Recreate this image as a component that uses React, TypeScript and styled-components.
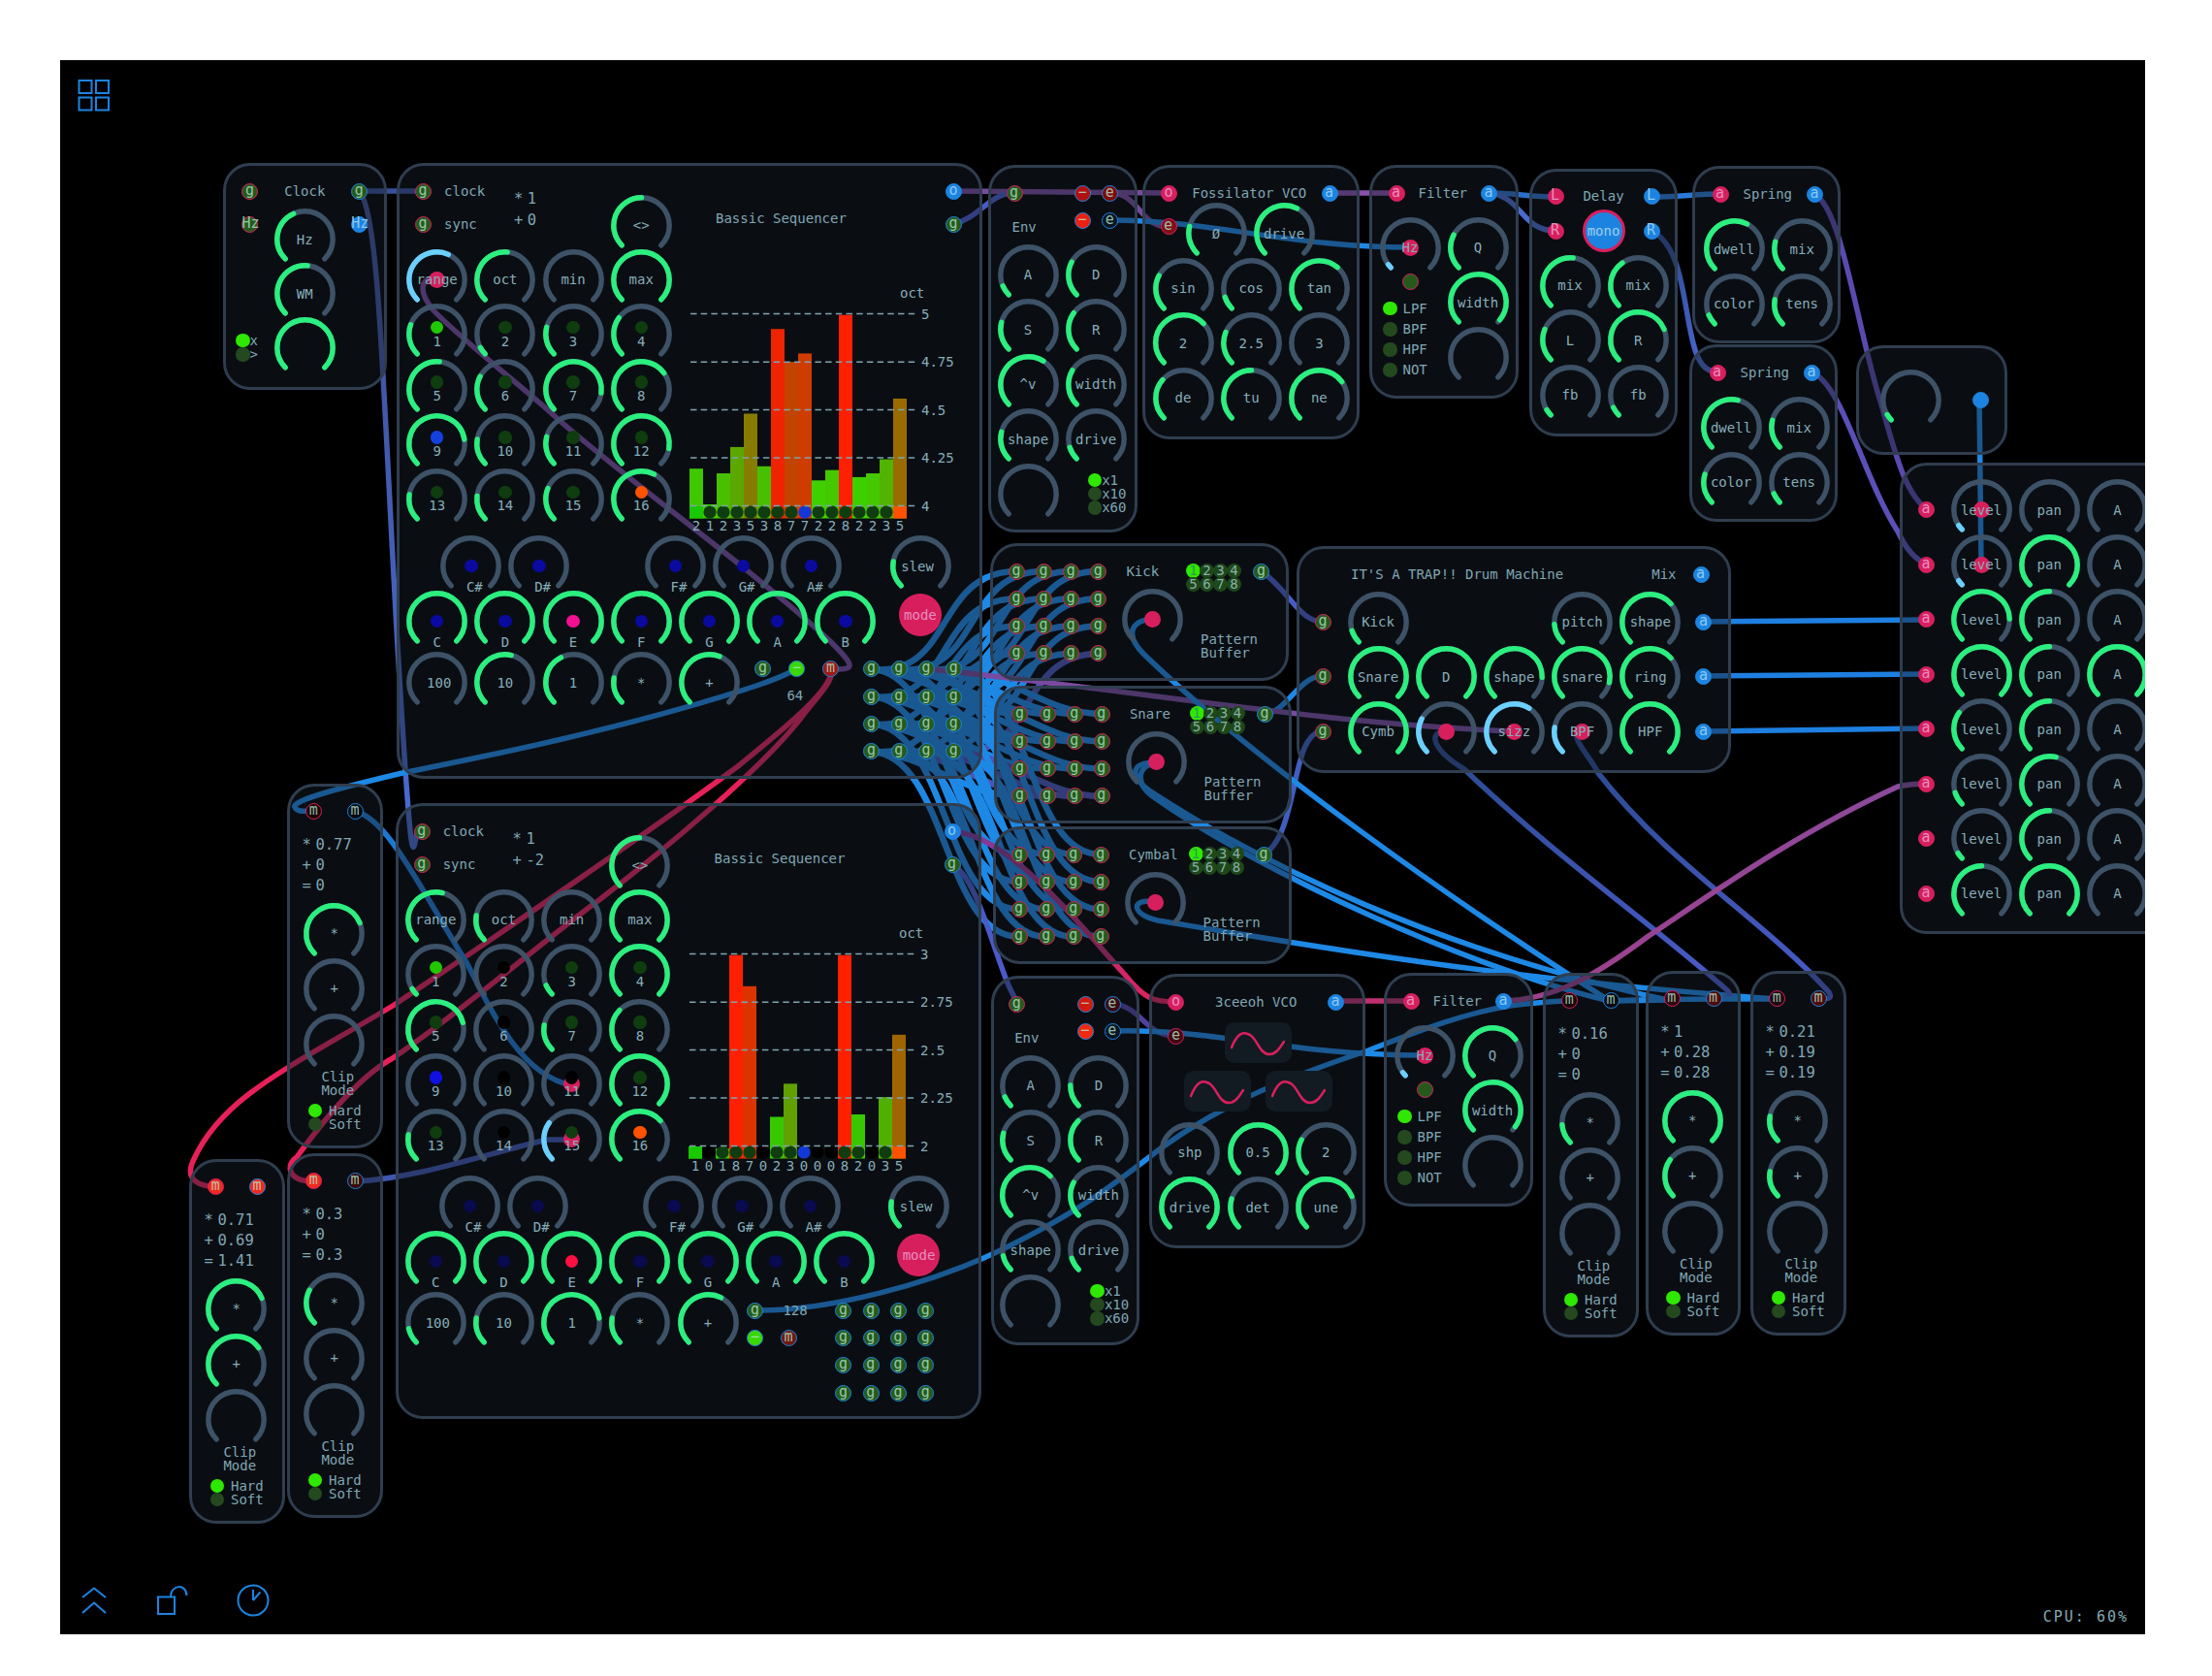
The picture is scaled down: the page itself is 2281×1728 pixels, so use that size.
import React from "react";
import styled, { createGlobalStyle } from "styled-components";

const GlobalStyle = createGlobalStyle`
  html, body { margin: 0; padding: 0; background: #fff; }
  body { font-family: "DejaVu Sans Mono", "Liberation Mono", monospace; font-size: 14px; color: #80a6b2; }
`;

const PINK = "#d81f5e";
const BLUE = "#1c84e0";
const WIRE = "#1e88e5";
const PURPLE = "#7a4a9e";
const INDIGO = "#4a5ac8";

const Page = styled.div`
  width: 2281px;
  height: 1728px;
  box-sizing: border-box;
  padding: 62px 69px 43px 62px;
  overflow: hidden;
`;
const Canvas = styled.main`
  position: relative;
  width: 2150px;
  height: 1623px;
  background: #000;
  overflow: hidden;
`;
const WireLayer = styled.svg`
  position: absolute;
  left: 0;
  top: 0;
  width: 2150px;
  height: 1623px;
  fill: none;
  stroke-linecap: round;
`;
const Module = styled.section<{ $x: number; $y: number; $w: number; $h: number }>`
  position: absolute;
  left: ${(p) => p.$x - 62}px;
  top: ${(p) => p.$y - 62}px;
  width: ${(p) => p.$w}px;
  height: ${(p) => p.$h}px;
  box-sizing: border-box;
  border: 3px solid #2f3e4f;
  border-radius: 28px;
  background: rgba(22, 30, 42, 0.45);
`;
const Icon = styled.svg<{ $x: number; $y: number }>`
  position: absolute;
  left: ${(p) => p.$x - 62}px;
  top: ${(p) => p.$y - 62}px;
  fill: none;
  stroke: ${BLUE};
  stroke-width: 2;
`;
const Cpu = styled.div`
  position: absolute;
  right: 17px;
  bottom: 9px;
  font-size: 15px;
  letter-spacing: 2px;
  color: #86aab6;
`;

/* ---------- knob ---------- */
const KnobBox = styled.div<{ $c?: number; $r?: number; $end?: boolean; $ml?: number }>`
  position: relative;
  width: 63px;
  height: 56px;
  ${(p) => (p.$c ? `grid-column: ${p.$c} / span 2;` : "")}
  ${(p) => (p.$r ? `grid-row: ${p.$r};` : "")}
  ${(p) => (p.$end ? "align-self: end;" : "")}
  ${(p) => (p.$ml ? `margin-left: ${p.$ml}px;` : "")}
`;
const KnobArc = styled.svg`
  display: block;
  overflow: visible;
  fill: none;
  stroke-linecap: round;
  stroke-width: 5.4;
`;
const KnobLabel = styled.span<{ $dy: number; $dx: number }>`
  position: absolute;
  left: ${(p) => p.$dx}px;
  right: ${(p) => -p.$dx}px;
  top: ${(p) => 22.5 + p.$dy}px;
  height: 18px;
  line-height: 18px;
  text-align: center;
  white-space: nowrap;
  color: #86adb8;
`;
const KnobDot = styled.i<{ $dy: number; $size: number; $color: string }>`
  position: absolute;
  left: ${(p) => 31.5 - p.$size / 2}px;
  top: ${(p) => 31.5 - p.$size / 2 + p.$dy}px;
  width: ${(p) => p.$size}px;
  height: ${(p) => p.$size}px;
  border-radius: 50%;
  background: ${(p) => p.$color};
`;

const pt = (f: number, r = 28.7) => {
  const a = ((-135 + 270 * f) * Math.PI) / 180;
  return `${(31.5 + r * Math.sin(a)).toFixed(2)} ${(31.5 - r * Math.cos(a)).toFixed(2)}`;
};
const arc = (f: number) => `M${pt(0)} A28.7 28.7 0 ${f > 2 / 3 ? 1 : 0} 1 ${pt(Math.max(f, 0.001))}`;

type KnobProps = {
  v: number;
  label?: string;
  dy?: number;
  dx?: number;
  mod?: boolean;
  dot?: string;
  dotDy?: number;
  pin?: boolean;
  c?: number;
  r?: number;
  end?: boolean;
  ml?: number;
};
const Knob = ({ v, label, dy = 0, dx = 0, mod, dot, dotDy = 0, pin, c, r, end, ml }: KnobProps) => (
  <KnobBox $c={c} $r={r} $end={end} $ml={ml}>
    <KnobArc width={63} height={56} viewBox="0 0 63 56">
      <path d={arc(1)} stroke="#3d5267" />
      {v > 0 && <path d={arc(v)} stroke={mod ? "#6bd0ff" : "#2bef7e"} />}
    </KnobArc>
    {pin && <KnobDot $dy={0} $size={17} $color={PINK} />}
    {dot && <KnobDot $dy={dotDy} $size={13.5} $color={dot} />}
    {label && (
      <KnobLabel $dy={dy} $dx={dx}>
        {label}
      </KnobLabel>
    )}
  </KnobBox>
);

/* ---------- ports and small parts ---------- */
const PortDot = styled.span<{ $fill: string; $ring: string; $ml?: number; $text: string }>`
  flex: none;
  display: block;
  box-sizing: border-box;
  width: 17px;
  height: 17px;
  border-radius: 50%;
  background: ${(p) => p.$fill};
  border: 1.6px solid ${(p) => p.$ring};
  color: ${(p) => p.$text};
  font-size: 15px;
  line-height: 12.5px;
  text-align: center;
  white-space: nowrap;
  text-indent: -1px;
  ${(p) => (p.$ml ? `margin-left: ${p.$ml}px;` : "")}
`;
const Port = ({
  t,
  fill,
  ring,
  ml,
  text = "rgba(175, 225, 200, 0.82)",
}: {
  t?: string;
  fill: string;
  ring: string;
  ml?: number;
  text?: string;
}) => (
  <PortDot $fill={fill} $ring={ring} $ml={ml} $text={text}>
    {t}
  </PortDot>
);
const GREENPORT = "#265a1c";
const GIn = ({ t = "g" }: { t?: string }) => <Port t={t} fill={GREENPORT} ring={PINK} />;
const GOut = ({ t = "g", ml }: { t?: string; ml?: number }) => <Port t={t} fill={GREENPORT} ring={BLUE} ml={ml} />;
const AIn = ({ t = "a" }: { t?: string }) => <Port t={t} fill={PINK} ring={PINK} text="#e58fc0" />;
const AOut = ({ t = "a" }: { t?: string }) => <Port t={t} fill={BLUE} ring={BLUE} text="#8cc8f0" />;

const LedRow = styled.div<{ $h: number; $gap: number }>`
  display: flex;
  align-items: center;
  height: ${(p) => p.$h}px;
  gap: ${(p) => p.$gap}px;
  line-height: ${(p) => p.$h}px;
`;
const LedDot = styled.i<{ $on?: boolean }>`
  flex: none;
  width: 14.5px;
  height: 14.5px;
  border-radius: 50%;
  background: ${(p) => (p.$on ? "#2ee800" : "#24491f")};
`;
const Led = ({ on, t, h = 14.2, gap = 0 }: { on?: boolean; t: string; h?: number; gap?: number }) => (
  <LedRow $h={h} $gap={gap}>
    <LedDot $on={on} />
    <span>{t}</span>
  </LedRow>
);

const Title = styled.div<{ $ml?: number; $w?: number; $center?: boolean }>`
  height: 17px;
  line-height: 17px;
  white-space: nowrap;
  ${(p) => (p.$ml ? `margin-left: ${p.$ml}px;` : "")}
  ${(p) => (p.$w ? `width: ${p.$w}px;` : "")}
  ${(p) => (p.$center ? "text-align: center; flex: 1;" : "")}
`;
const HeadRow = styled.div<{ $pl: number; $pr: number; $pt: number }>`
  display: flex;
  align-items: center;
  padding: ${(p) => p.$pt}px ${(p) => p.$pr}px 0 ${(p) => p.$pl}px;
`;
const KnobGrid = styled.div<{ $cols: number; $pl: number; $mt: number }>`
  display: grid;
  grid-template-columns: repeat(${(p) => p.$cols}, 70.2px);
  grid-auto-rows: 56.6px;
  padding-left: ${(p) => p.$pl}px;
  margin-top: ${(p) => p.$mt}px;
`;

/* math read-out: a symbol cell and a value */
const MathBlock = styled.div<{ $lh: number; $mt: number; $ml: number }>`
  margin: ${(p) => p.$mt}px 0 0 ${(p) => p.$ml}px;
  font-size: 15.5px;
  line-height: ${(p) => p.$lh}px;
`;
const MathRow = styled.div`
  display: flex;
  white-space: pre;
`;
const MathSym = styled.span`
  width: 13.8px;
  flex: none;
`;
const MathLines = ({ lines, lh, mt, ml }: { lines: string[]; lh: number; mt: number; ml: number }) => (
  <MathBlock $lh={lh} $mt={mt} $ml={ml}>
    {lines.map((l) => (
      <MathRow key={l}>
        <MathSym>{l[0]}</MathSym>
        <span>{l.slice(1)}</span>
      </MathRow>
    ))}
  </MathBlock>
);

/* ---------- clock ---------- */
const ClockGrid = styled.div`
  display: grid;
  grid-template-columns: 49.8px 63px 49.8px;
  grid-template-rows: 35px 56px 56px 56px;
  padding-top: 9px;
  justify-items: center;
  align-items: center;
`;
const SideCell = styled.div<{ $c: number; $r: number; $mt: number }>`
  grid-column: ${(p) => p.$c};
  grid-row: ${(p) => p.$r};
  align-self: start;
  margin-top: ${(p) => p.$mt}px;
  width: 100%;
  display: flex;
  flex-direction: column;
  align-items: center;
`;
const ClockKnob = styled.div<{ $r: number }>`
  grid-column: 2;
  grid-row: ${(p) => p.$r};
`;
const LedStack = styled.div<{ $pl?: number }>`
  align-self: stretch;
  ${(p) => (p.$pl ? `padding-left: ${p.$pl}px;` : "")}
`;

const Clock = () => (
  <Module $x={230} $y={168} $w={169} $h={234}>
    <ClockGrid>
      <GIn />
      <Title>Clock</Title>
      <GOut />
      <SideCell $c={1} $r={2} $mt={8.3}>
        <GIn t="Hz" />
      </SideCell>
      <ClockKnob $r={2}>
        <Knob v={0.41} label="Hz" />
      </ClockKnob>
      <SideCell $c={3} $r={2} $mt={8.3}>
        <AOut t="Hz" />
      </SideCell>
      <ClockKnob $r={3}>
        <Knob v={0.52} label="WM" />
      </ClockKnob>
      <SideCell $c={1} $r={4} $mt={17}>
        <LedStack $pl={10}>
          <Led on t="x" />
          <Led t=">" />
        </LedStack>
      </SideCell>
      <ClockKnob $r={4}>
        <Knob v={1} />
      </ClockKnob>
    </ClockGrid>
  </Module>
);

/* ---------- sequencer ---------- */
const SeqTop = styled.div`
  display: flex;
  padding: 14px 0 0 7.2px;
  box-sizing: border-box;
  height: 381px;
`;
const SeqKnobs = styled.div`
  display: grid;
  flex: none;
  width: 280.8px;
  grid-template-columns: repeat(4, 70.2px);
  grid-template-rows: 71.5px repeat(5, 56.6px);
`;
const SeqHeader = styled.div`
  grid-column: 1 / 4;
  display: flex;
  padding-top: 3.5px;
`;
const SeqPorts = styled.div`
  width: 110.8px;
  padding-left: 8.9px;
  box-sizing: border-box;
  display: flex;
  flex-direction: column;
  gap: 17px;
`;
const SeqPortRow = styled.div`
  display: flex;
  align-items: center;
  gap: 13px;
  height: 17px;
  line-height: 17px;
`;
const SeqRight = styled.div`
  flex: none;
  width: 306px;
`;
const SeqRightHead = styled.div`
  display: flex;
  justify-content: space-between;
  height: 71.5px;
  padding: 3.5px 0 0 38px;
  box-sizing: border-box;
`;
const SeqTitle = styled.div`
  margin-top: 28px;
  line-height: 17px;
`;
const SeqOutPorts = styled.div`
  width: 31px;
  display: flex;
  flex-direction: column;
  gap: 17px;
`;
const Chart = styled.svg`
  display: block;
  overflow: visible;
  text {
    font-family: "DejaVu Sans Mono", monospace;
    font-size: 14px;
    fill: #86adb8;
  }
  line {
    stroke: #7fa4ad;
    stroke-width: 1.4;
    stroke-dasharray: 6.5 4.2;
  }
`;
const NoteGrid = styled.div`
  display: grid;
  grid-template-columns: repeat(18, 35.1px);
  grid-template-rows: 57.2px 63px 56px;
  padding-left: 7.2px;
`;
const ModeCell = styled.div`
  grid-column: 15 / span 4;
  grid-row: 2;
  padding: 2.8px 0 0 16.4px;
`;
const RoundButton = styled.div<{ $ring?: boolean }>`
  box-sizing: border-box;
  width: 44px;
  height: 44px;
  border-radius: 50%;
  background: ${(p) => (p.$ring ? BLUE : PINK)};
  border: ${(p) => (p.$ring ? `3px solid ${PINK}` : "none")};
  display: flex;
  align-items: center;
  justify-content: center;
  color: ${(p) => (p.$ring ? "#9ccff0" : "#e58fc0")};
`;
const SeqPortCell = styled.div`
  grid-column: 11 / -1;
  grid-row: 3;
  display: flex;
  width: 280px;
`;
const GGrid = styled.div`
  flex: none;
  display: grid;
  grid-template-columns: repeat(4, 11.3px);
  column-gap: 17px;
  row-gap: 11.3px;
  grid-auto-rows: 17px;
`;
const PortLine = styled.div<{ $gap: number; $h?: number }>`
  display: flex;
  align-items: center;
  gap: ${(p) => p.$gap}px;
  margin-bottom: 11px;
  ${(p) => (p.$h ? `height: ${p.$h}px;` : "")}
`;
const PortsA = styled.div`
  width: 120.3px;
  flex: none;
  padding: 9.3px 0 0 8.3px;
  box-sizing: border-box;
`;
const PortsB = styled.div`
  width: 92.7px;
  flex: none;
  padding: 10.5px 0 0 1.7px;
  box-sizing: border-box;
`;
const PortNote = styled.div<{ $ml: number; $mt: number }>`
  margin: ${(p) => p.$mt}px 0 0 ${(p) => p.$ml}px;
  line-height: 17px;
`;
const GGridWrap = styled.div<{ $pt: number }>`
  padding-top: ${(p) => p.$pt}px;
`;
const GOutTone = () => <Port t="g" fill={GREENPORT} ring={BLUE} />;

const GPorts = () => (
  <GGrid>
    {Array.from({ length: 16 }, (_, i) => (
      <GOutTone key={i} />
    ))}
  </GGrid>
);

type Step = { v: number; dot: string; mod?: boolean; pin?: boolean };
type SeqProps = {
  x: number;
  y: number;
  math: string[];
  head: number[];
  steps: Step[];
  noteDot: string;
  eDot: string;
  bottom: number[];
  slew: number;
  labels: string[];
  digits: string;
  bars: [number, string, number][];
  rangeMod?: boolean;
  variant: "a" | "b";
  rangePin?: boolean;
};
const G = "#0f3d0f";
const K = "#000";

const Sequencer = (p: SeqProps) => {
  const chartBars = p.bars;
  return (
    <Module $x={p.x} $y={p.y} $w={604} $h={635}>
      <SeqTop>
        <SeqKnobs>
          <SeqHeader>
            <SeqPorts>
              <SeqPortRow>
                <GIn />
                <span>clock</span>
              </SeqPortRow>
              <SeqPortRow>
                <GIn />
                <span>sync</span>
              </SeqPortRow>
            </SeqPorts>
            <MathLines lines={p.math} lh={22} mt={5} ml={0} />
          </SeqHeader>
          <Knob v={0.5} label="<>" end />
          <Knob v={p.head[0]} label="range" mod={p.rangeMod} pin={p.rangePin} />
          <Knob v={p.head[1]} label="oct" />
          <Knob v={0} label="min" />
          <Knob v={1} label="max" />
          {p.steps.map((s, i) => (
            <Knob key={i} v={s.v} label={String(i + 1)} dy={7} dot={s.dot} dotDy={-7} mod={s.mod} pin={s.pin} />
          ))}
        </SeqKnobs>
        <SeqRight>
          <SeqRightHead>
            <SeqTitle>Bassic Sequencer</SeqTitle>
            <SeqOutPorts>
              <AOut t="o" />
              <GOutTone />
            </SeqOutPorts>
          </SeqRightHead>
          <Chart width={306} height={296} viewBox="0 0 306 296">
            {chartBars.map(([top, color], i) =>
              top < 277 ? <rect key={i} x={11 + i * 14} y={top} width={14} height={277.5 - top} fill={color} /> : null
            )}
            {chartBars.map(([, , kind], i) =>
              kind === 3 ? (
                <rect key={i} x={11 + i * 14} y={265} width={14} height={12.5} fill={i === 0 ? "#18c800" : "#ff5200"} />
              ) : (
                <circle key={i} cx={18 + i * 14} cy={271} r={6.6} fill={kind === 2 ? "#1438d8" : kind === 1 ? K : G} />
              )
            )}
            {[66.5, 116.2, 165.5, 215, 264.5].map((ly, i) => (
              <g key={ly}>
                <line x1={12} x2={245} y1={ly} y2={ly} />
                <text x={250} y={ly + 5}>
                  {p.labels[i]}
                </text>
              </g>
            ))}
            <text x={228} y={50}>
              oct
            </text>
            {p.digits.split("").map((d, i) => (
              <text key={i} x={18 + i * 14} y={290} textAnchor="middle">
                {d}
              </text>
            ))}
          </Chart>
        </SeqRight>
      </SeqTop>
      <NoteGrid>
        {[
          ["C#", 2],
          ["D#", 4],
          ["F#", 8],
          ["G#", 10],
          ["A#", 12],
        ].map(([n, c]) => (
          <Knob key={n} v={0} label={n as string} dy={21} dx={3.6} dot={p.noteDot} c={c as number} r={1} />
        ))}
        <Knob v={p.slew} label="slew" c={15} r={1} ml={7} dx={-3} />
        {["C", "D", "E", "F", "G", "A", "B"].map((n, i) => (
          <Knob key={n} v={1} label={n} dy={21} dot={n === "E" ? p.eDot : p.noteDot} c={1 + i * 2} r={2} />
        ))}
        <ModeCell>
          <RoundButton>mode</RoundButton>
        </ModeCell>
        {["100", "10", "1", "*", "+"].map((n, i) => (
          <Knob key={n} v={p.bottom[i]} label={n} dx={i === 0 ? 2 : 0} c={1 + i * 2} r={3} />
        ))}
        <SeqPortCell>
          {p.variant === "a" ? (
            <>
              <PortsA>
                <PortLine $gap={18}>
                  <GOutTone />
                  <Port t="−" fill="#38d800" ring={BLUE} />
                  <Port t="m" fill="#a01810" ring={BLUE} />
                </PortLine>
                <PortNote $ml={33} $mt={0}>
                  64
                </PortNote>
              </PortsA>
              <GGridWrap $pt={9.3}>
                <GPorts />
              </GGridWrap>
            </>
          ) : (
            <>
              <PortsB>
                <PortLine $gap={20}>
                  <GOutTone />
                  <span>128</span>
                </PortLine>
                <PortLine $gap={17.5}>
                  <Port t="−" fill="#38d800" ring={BLUE} />
                  <Port t="m" fill="#701810" ring={BLUE} />
                </PortLine>
              </PortsB>
              <GGridWrap $pt={10.5}>
                <GPorts />
              </GGridWrap>
            </>
          )}
        </SeqPortCell>
      </NoteGrid>
    </Module>
  );
};

const z1 = (t: number) => t / 2.063 - 196.5;
const z6 = (t: number) => t / 1.96 - 116.5;

const S1: SeqProps = {
  x: 409,
  y: 168,
  math: ["*1", "+0"],
  head: [0.59, 0.52],
  rangeMod: true,
  rangePin: true,
  steps: [
    { v: 0.24, dot: "#20c800" },
    { v: 0.06, dot: G },
    { v: 0.22, dot: G },
    { v: 0.3, dot: G },
    { v: 0.52, dot: G },
    { v: 0.27, dot: G },
    { v: 0.86, dot: G },
    { v: 0.7, dot: G },
    { v: 0.8, dot: "#1440e0" },
    { v: 0.2, dot: G },
    { v: 0.22, dot: G },
    { v: 0.87, dot: G },
    { v: 0.2, dot: G },
    { v: 0.19, dot: G },
    { v: 0.25, dot: G },
    { v: 0.6, dot: "#ff5200" },
  ],
  noteDot: "#0a0aa0",
  eDot: "#f01090",
  bottom: [0, 0.55, 0.4, 0.2, 0.58],
  slew: 0.2,
  labels: ["5", "4.75", "4.5", "4.25", "4"],
  digits: "2123538772282235",
  variant: "a",
  bars: [
    [z1(872), "#3ec800", 3],
    [z1(948), "#40d000", 0],
    [z1(882), "#48c000", 0],
    [z1(826), "#5aa800", 0],
    [z1(755), "#857c00", 0],
    [z1(867), "#48c000", 0],
    [z1(575), "#ee2400", 0],
    [z1(645), "#c24400", 0],
    [z1(627), "#cf3c00", 2],
    [z1(897), "#40d000", 0],
    [z1(875), "#44c800", 0],
    [z1(545), "#ff2000", 0],
    [z1(890), "#3cd000", 0],
    [z1(882), "#44c800", 0],
    [z1(852), "#50b400", 0],
    [z1(723), "#9a6c00", 3],
  ],
};

const S2: SeqProps = {
  x: 407.6,
  y: 828,
  math: ["*1", "+-2"],
  head: [0.55, 0.2],
  steps: [
    { v: 0.05, dot: "#20c800" },
    { v: 0, dot: K },
    { v: 0.08, dot: G },
    { v: 1, dot: G },
    { v: 0.78, dot: G },
    { v: 0, dot: K },
    { v: 0.2, dot: G },
    { v: 0.33, dot: G },
    { v: 0, dot: "#1010e0" },
    { v: 0, dot: K },
    { v: 0, dot: K, pin: true },
    { v: 1, dot: G },
    { v: 0.2, dot: G },
    { v: 0, dot: K },
    { v: 0.3, dot: G, mod: true, pin: true },
    { v: 0.68, dot: "#ff5200" },
  ],
  noteDot: "#0a0a50",
  eDot: "#ff1040",
  bottom: [0.12, 0.2, 0.8, 0.2, 0.6],
  slew: 0.2,
  labels: ["3", "2.75", "2.5", "2.25", "2"],
  digits: "1018702300082035",
  variant: "b",
  bars: [
    [z6(752), "#2ed000", 3],
    [300, "#000", 1],
    [z6(752), "#30d000", 0],
    [z6(361), "#ff2000", 0],
    [z6(424), "#dc3400", 0],
    [300, "#000", 1],
    [z6(688), "#38c800", 0],
    [z6(621), "#60a000", 0],
    [300, "#000", 2],
    [300, "#000", 1],
    [300, "#000", 1],
    [z6(361), "#ff2000", 0],
    [z6(683), "#38c800", 0],
    [300, "#000", 1],
    [z6(648), "#50b000", 0],
    [z6(522), "#a06400", 3],
  ],
};

/* ---------- env ---------- */
const EnvHead = styled.div`
  display: grid;
  grid-template-columns: 17px 53.5px 17px 11.2px 17px;
  grid-auto-rows: 17px;
  row-gap: 11px;
  padding: 17.5px 0 0 15.5px;
`;
const EnvName = styled.div`
  grid-column: 1 / span 2;
  margin: 7px 0 0 6px;
  line-height: 17px;
`;
const Gap = styled.span``;
const LedBox = styled.div<{ $pl: number; $pt: number }>`
  padding: ${(p) => p.$pt}px 0 0 ${(p) => p.$pl}px;
`;

const Env = ({ x, y, h, vals, fill }: { x: number; y: number; h: number; vals: number[]; fill: string[] }) => (
  <Module $x={x} $y={y} $w={153.5} $h={h}>
    <EnvHead>
      <GIn />
      <Gap />
      <Port t="−" fill={fill[0]} ring={BLUE} />
      <Gap />
      <Port t="e" fill={fill[1]} ring={BLUE} />
      <EnvName>Env</EnvName>
      <Port t="−" fill={fill[2]} ring={BLUE} />
      <Gap />
      <Port t="e" fill={fill[3]} ring={BLUE} />
    </EnvHead>
    <KnobGrid $cols={2} $pl={6.5} $mt={16}>
      {["A", "D", "S", "R", "^v", "width", "shape", "drive"].map((n, i) => (
        <Knob key={i} v={vals[i]} label={n} />
      ))}
      <Knob v={0} />
      <LedBox $pl={23} $pt={10}>
        <Led on t="x1" />
        <Led t="x10" />
        <Led t="x60" />
      </LedBox>
    </KnobGrid>
  </Module>
);

/* ---------- vcos ---------- */
const VcoSubRow = styled.div`
  display: flex;
  padding: 1.7px 0 0 15.5px;
  height: 58px;
  box-sizing: border-box;
`;
const VcoE = styled.div`
  width: 26px;
  flex: none;
  padding-top: 16.3px;
`;
const Vco = () => (
  <Module $x={1178} $y={170} $w={224} $h={283}>
    <HeadRow $pl={16} $pr={19.5} $pt={17.5}>
      <AIn t="o" />
      <Title $center>Fossilator VCO</Title>
      <AOut />
    </HeadRow>
    <VcoSubRow>
      <VcoE>
        <Port t="e" fill="#801018" ring={PINK} />
      </VcoE>
      <Knob v={0.22} label="Ø" />
      <Knob v={0.6} label="drive" ml={7} />
    </VcoSubRow>
    <KnobGrid $cols={3} $pl={7.5} $mt={0}>
      {[
        ["sin", 0.27],
        ["cos", 0.1],
        ["tan", 0.65],
        ["2", 0.67],
        ["2.5", 0.25],
        ["3", 0],
        ["de", 0.32],
        ["tu", 0.5],
        ["ne", 0.7],
      ].map(([n, v], i) => (
        <Knob key={i} v={v as number} label={n as string} />
      ))}
    </KnobGrid>
  </Module>
);

const WaveBtn = styled.div<{ $ml: number }>`
  flex: none;
  width: 69px;
  height: 42px;
  border-radius: 10px;
  background: #121b22;
  margin-left: ${(p) => p.$ml}px;
  display: flex;
  align-items: center;
  justify-content: center;
`;
const Sine = () => (
  <svg width={56} height={28} viewBox="0 0 56 28" fill="none" stroke={PINK} strokeWidth={2.6} strokeLinecap="round">
    <path d="M1 19 C 7 4, 13 2, 20 6 C 28 11, 30 26, 40 26 C 46 26, 50 21, 55 13" />
  </svg>
);
const WaveRow = styled.div<{ $mt: number }>`
  display: flex;
  margin-top: ${(p) => p.$mt}px;
`;
const WavePort = styled.div`
  padding: 5.5px 0 0 16px;
  flex: none;
`;
const Vco2 = () => (
  <Module $x={1185.4} $y={1004} $w={222.6} $h={283}>
    <HeadRow $pl={16} $pr={19} $pt={17.5}>
      <AIn t="o" />
      <Title $center>3ceeoh VCO</Title>
      <AOut />
    </HeadRow>
    <WaveRow $mt={12.5}>
      <WavePort>
        <Port t="e" fill="#400810" ring={PINK} />
      </WavePort>
      <WaveBtn $ml={41.6}>
        <Sine />
      </WaveBtn>
    </WaveRow>
    <WaveRow $mt={8}>
      <WaveBtn $ml={32.5}>
        <Sine />
      </WaveBtn>
      <WaveBtn $ml={15}>
        <Sine />
      </WaveBtn>
    </WaveRow>
    <KnobGrid $cols={3} $pl={7} $mt={10.5}>
      {[
        ["shp", 0],
        ["0.5", 1],
        ["2", 0.27],
        ["drive", 1],
        ["det", 0.23],
        ["une", 0.75],
      ].map(([n, v], i) => (
        <Knob key={i} v={v as number} label={n as string} />
      ))}
    </KnobGrid>
  </Module>
);

/* ---------- filter ---------- */
const FilterBody = styled.div`
  display: flex;
  padding: 16px 0 0 7.5px;
`;
const FilterLeft = styled.div`
  width: 70px;
  flex: none;
`;
const FilterRight = styled.div`
  display: grid;
  grid-auto-rows: 56.6px;
`;
const FilterPortBox = styled.div`
  margin: 2px 0 0 23px;
`;
const Filter = ({ x, y, w, vals }: { x: number; y: number; w: number; vals: number[] }) => (
  <Module $x={x} $y={y} $w={w} $h={241}>
    <HeadRow $pl={16.5} $pr={19} $pt={17.5}>
      <AIn />
      <Title $center>Filter</Title>
      <AOut />
    </HeadRow>
    <FilterBody>
      <FilterLeft>
        <Knob v={vals[0]} label="Hz" mod pin />
        <FilterPortBox>
          <GIn t="" />
        </FilterPortBox>
        <LedBox $pl={3.5} $pt={9}>
          <Led on t="LPF" h={21.2} gap={6} />
          <Led t="BPF" h={21.2} gap={6} />
          <Led t="HPF" h={21.2} gap={6} />
          <Led t="NOT" h={21.2} gap={6} />
        </LedBox>
      </FilterLeft>
      <FilterRight>
        <Knob v={vals[1]} label="Q" />
        <Knob v={vals[2]} label="width" />
        <Knob v={0} />
      </FilterRight>
    </FilterBody>
  </Module>
);

/* ---------- delay / spring / mixer ---------- */
const DelayHead = styled.div`
  display: grid;
  grid-template-columns: 17px 1fr 17px;
  grid-template-rows: 17px 44px;
  row-gap: 5px;
  padding: 17px 15.5px 0 15.5px;
  align-items: center;
  justify-items: center;
  margin-bottom: 2.5px;
`;
const Delay = () => (
  <Module $x={1577} $y={174} $w={153} $h={276}>
    <DelayHead>
      <AIn t="L" />
      <Title>Delay</Title>
      <AOut t="L" />
      <AIn t="R" />
      <RoundButton $ring>mono</RoundButton>
      <AOut t="R" />
    </DelayHead>
    <KnobGrid $cols={2} $pl={7.5} $mt={0}>
      {[
        ["mix", 0.52],
        ["mix", 0.37],
        ["L", 0.25],
        ["R", 0.75],
        ["fb", 0.05],
        ["fb", 0.07],
      ].map(([n, v], i) => (
        <Knob key={i} v={v as number} label={n as string} />
      ))}
    </KnobGrid>
  </Module>
);
const Spring = ({ x, y, vals }: { x: number; y: number; vals: number[] }) => (
  <Module $x={x} $y={y} $w={153} $h={183}>
    <HeadRow $pl={17.5} $pr={15} $pt={17.5}>
      <AIn />
      <Title $center>Spring</Title>
      <AOut />
    </HeadRow>
    <KnobGrid $cols={2} $pl={8.5} $mt={16.5}>
      {["dwell", "mix", "color", "tens"].map((n, i) => (
        <Knob key={i} v={vals[i]} label={n} />
      ))}
    </KnobGrid>
  </Module>
);
const TinyBody = styled.div`
  display: flex;
  align-items: flex-start;
  padding: 22.5px 0 0 22.2px;
`;
const TinyPort = styled.div`
  margin: 23px 0 0 31.8px;
`;
const Tiny = () => (
  <Module $x={1914} $y={355.5} $w={156} $h={113.5}>
    <TinyBody>
      <Knob v={0.05} />
      <TinyPort>
        <AOut t="" />
      </TinyPort>
    </TinyBody>
  </Module>
);

const MixerGrid = styled.div`
  display: grid;
  grid-template-columns: 49.5px repeat(3, 70.2px);
  grid-auto-rows: 56.5px;
  padding-top: 14.8px;
`;
const MixPort = styled.div`
  padding: 23px 0 0 16px;
`;
const levels: [number, boolean][] = [
  [0.04, true],
  [0.04, true],
  [0.83, false],
  [1, false],
  [0.3, false],
  [0.1, false],
  [0.05, false],
  [0.5, false],
];
const pans = [0, 1, 0.5, 0.5, 0.5, 0.55, 0.5, 1];
const Mixer = () => (
  <Module $x={1959} $y={476.7} $w={340} $h={486.3}>
    <MixerGrid>
      {levels.map(([v, m], i) => (
        <React.Fragment key={i}>
          <MixPort>
            <AIn />
          </MixPort>
          <Knob v={v} label="level" mod={m} pin={m} />
          <Knob v={pans[i]} label="pan" />
          <Knob v={i === 3 ? 1 : 0} label="A" />
        </React.Fragment>
      ))}
    </MixerGrid>
  </Module>
);

/* ---------- drum ---------- */
const DrumHead = styled.div`
  display: flex;
  align-items: center;
  padding: 17.5px 19.5px 0 53px;
  height: 17px;
`;
const DrumTitle = styled.div`
  flex: 1;
  white-space: nowrap;
`;
const DrumMix = styled.div`
  margin-right: 17px;
`;
const DrumGrid = styled.div`
  display: grid;
  grid-template-columns: 49.5px repeat(5, 70.2px) 30px;
  grid-auto-rows: 56.5px;
  margin-top: 9px;
`;
const DrumLeft = styled.div`
  padding: 23px 0 0 16px;
`;
const DrumRight = styled.div`
  padding: 23px 0 0 8px;
`;
const Blank = styled.div``;
const Drum = () => (
  <Module $x={1337} $y={563} $w={448} $h={234}>
    <DrumHead>
      <DrumTitle>IT'S A TRAP!! Drum Machine</DrumTitle>
      <DrumMix>Mix</DrumMix>
      <AOut />
    </DrumHead>
    <DrumGrid>
      <DrumLeft>
        <GIn />
      </DrumLeft>
      <Knob v={0.1} label="Kick" />
      <Blank />
      <Blank />
      <Knob v={0.15} label="pitch" />
      <Knob v={0.68} label="shape" />
      <DrumRight>
        <AOut />
      </DrumRight>
      <DrumLeft>
        <GIn />
      </DrumLeft>
      <Knob v={1} label="Snare" />
      <Knob v={1} label="D" />
      <Knob v={0.84} label="shape" />
      <Knob v={0.88} label="snare" />
      <Knob v={0.68} label="ring" />
      <DrumRight>
        <AOut />
      </DrumRight>
      <DrumLeft>
        <GIn />
      </DrumLeft>
      <Knob v={1} label="Cymb" />
      <Knob v={0.27} mod pin />
      <Knob v={0.62} label="sizz" mod pin />
      <Knob v={0.2} label="BPF" mod pin />
      <Knob v={1} label="HPF" />
      <DrumRight>
        <AOut />
      </DrumRight>
    </DrumGrid>
  </Module>
);

/* ---------- pattern buffers ---------- */
const PatRow = styled.div`
  display: flex;
  padding-top: 17.5px;
`;
const PatPorts = styled.div`
  flex: none;
  width: 131px;
  padding-left: 15.6px;
  box-sizing: border-box;
  display: grid;
  grid-template-columns: repeat(4, 28.1px);
  grid-auto-rows: 28.3px;
`;
const PatLeft = styled.div`
  width: 68px;
  flex: none;
  padding-left: 6px;
  box-sizing: border-box;
`;
const PatKnob = styled.div`
  margin: 9px 0 0 -4px;
`;
const PatDigits = styled.div`
  display: grid;
  grid-template-columns: repeat(4, 14px);
  grid-auto-rows: 14px;
  flex: none;
`;
const PatDigit = styled.span<{ $on?: boolean }>`
  display: block;
  width: 15px;
  height: 15px;
  border-radius: 50%;
  line-height: 15px;
  text-align: center;
  text-indent: -1px;
  background: ${(p) => (p.$on ? "#2ee800" : "#1e481a")};
  color: ${(p) => (p.$on ? "#2e9a50" : "#88b0a8")};
`;
const PatTop = styled.div`
  display: flex;
  gap: 13px;
  height: 34px;
`;
const PatText = styled.div`
  margin: 37px 0 0 14.6px;
  line-height: 14px;
`;
const Pattern = ({ x, y, name }: { x: number; y: number; name: string }) => (
  <Module $x={x} $y={y} $w={307.6} $h={142}>
    <PatRow>
      <PatPorts>
        {Array.from({ length: 16 }, (_, i) => (
          <GIn key={i} />
        ))}
      </PatPorts>
      <PatLeft>
        <Title>{name}</Title>
        <PatKnob>
          <Knob v={0} pin />
        </PatKnob>
      </PatLeft>
      <div>
        <PatTop>
          <PatDigits>
            {"12345678".split("").map((d, i) => (
              <PatDigit key={d} $on={i === 0}>
                {d}
              </PatDigit>
            ))}
          </PatDigits>
          <GOut />
        </PatTop>
        <PatText>
          Pattern
          <br />
          Buffer
        </PatText>
      </div>
    </PatRow>
  </Module>
);

/* ---------- attenuverter ---------- */
const AttHead = styled.div`
  display: flex;
  gap: 25.8px;
  padding: 16.5px 0 0 16.2px;
`;
const AttKnobs = styled.div`
  padding: 0 0 0 14.1px;
  margin-top: 7px;
  display: grid;
  grid-auto-rows: 57px;
`;
const AttClip = styled.div`
  margin: 1px 0 0 0;
  padding-left: 6px;
  text-align: center;
  line-height: 14px;
`;
const AttLeds = styled.div`
  margin: 7.5px 0 0 18.5px;
`;
const Att = ({
  x,
  y,
  h = 376,
  math,
  v,
  fill,
}: {
  x: number;
  y: number;
  h?: number;
  math: string[];
  v: number[];
  fill: string[];
}) => (
  <Module $x={x} $y={y} $w={98.5} $h={h}>
    <AttHead>
      <Port t="m" fill={fill[0]} ring={PINK} />
      <Port t="m" fill={fill[1]} ring={BLUE} />
    </AttHead>
    <MathLines lines={math} lh={21} mt={16} ml={12.6} />
    <AttKnobs>
      <Knob v={v[0]} label="*" />
      <Knob v={v[1]} label="+" />
      <Knob v={0} />
    </AttKnobs>
    <AttClip>
      Clip
      <br />
      Mode
    </AttClip>
    <AttLeds>
      <Led on t="Hard" h={14} gap={7} />
      <Led t="Soft" h={14} gap={7} />
    </AttLeds>
  </Module>
);

/* ---------- wires ---------- */
type W = [string, string, string?, number?];
const wires: W[] = [
  ["M370 197 L437 197", "#3a4f9a"],
  ["M370 197 C 392 215, 395 420, 412 700 S 425 830, 435 857", "#3d4f96", "#4a6ad0"],
  ["M451 288 C 434 284 430 300 447 320 C 470 345 540 400 573 430 C 640 490 780 590 856 661 C 885 690 880 690 857 690", PURPLE],
  ["M983 197 L1205 199", PURPLE],
  ["M1145 199 C 1175 199, 1175 234, 1205 234", PURPLE],
  ["M983 231 C 1010 225, 1020 199, 1046 199", INDIGO],
  ["M1145 227 C 1250 227, 1330 255, 1454 255", WIRE],
  ["M1374 199 L1440 199", "#8a50b0"],
  ["M1538 199 C 1560 199,1580 203,1604 203", "#2a70c8"],
  ["M1538 199 C 1570 205,1570 238,1604 238", "#4a6ad0"],
  ["M1703 203 C 1730 203,1750 200,1774 200", "#2a78d8"],
  ["M1703 238 C 1750 260,1730 383,1769 383", "#2f4a90", "#4a66d0"],
  ["M1871 200 C 1900 215,1915 340,1940 417 C 1955 470,1965 510,1988 526", "#5a4ab0"],
  ["M1867 383 C 1900 395, 1920 490, 1957 548 C 1965 565 1975 578 1988 582", "#5a50b8"],
  ["M2041 412 L2043 582", WIRE],
  ["M1757 641 L1988 639", "#1e7fe0"],
  ["M1757 697 L1988 695", "#1e7fe0"],
  ["M1757 754 L1988 751", "#1e7fe0"],
  ["M1301 589 C 1330 610,1340 641,1364 641", INDIGO],
  ["M1305 737 C 1330 730,1340 697,1364 697", WIRE],
  ["M1303 881 C 1340 860,1330 754,1364 754", "#3f5fc0"],
  ["M960 690 C 1200 715,1350 745,1561 754", PURPLE],
  ["M1189 638 C 1165 640,1160 655,1180 675 C 1300 790,1500 930,1660 1032", WIRE],
  ["M1193 786 C 1165 786,1165 800,1185 815 C 1300 890,1480 980,1724 1032", WIRE],
  ["M1193 786 C 1170 790,1172 810,1190 822 C 1300 900,1520 1000,1660 1032", WIRE],
  ["M1191 930 C 1165 925,1165 945,1200 950 C 1350 975,1550 1010,1832 1030", WIRE],
  ["M1491 754 C 1470 755,1480 775,1510 793 C 1600 880,1700 950,1780 1020 C 1790 1030,1780 1030,1766 1030", "#2a4a90", INDIGO],
  ["M1631 754 C 1615 756,1640 780,1648 797 C 1720 890,1820 950,1886 1023 C 1890 1030,1885 1030,1876 1030", "#2a4a90", INDIGO],
  ["M1660 1032 L1724 1031", WIRE],
  ["M1660 1032 C 1700 1030,1760 1030,1832 1030", WIRE],
  ["M779 1351 C 850 1352,960 1325,1040 1285 C 1100 1255,1130 1235,1176 1200 C 1250 1140,1330 1110,1411 1083 C 1470 1060,1510 1045,1557 1037 C 1590 1033,1600 1032,1619 1032", WIRE],
  ["M1553 1032 C 1600 1030,1640 1010,1700 965 C 1760 925,1850 860,1957 811 C 1970 808,1980 808,1988 808", "#a0408a", "#8a4a9e"],
  ["M1381 1032 L1455 1032", "#c03070"],
  ["M1147 1034 C 1180 1040,1180 1068,1213 1068", "#5040a0"],
  ["M1147 1063 C 1250 1060,1330 1088,1466 1088", WIRE],
  ["M981 892 C 1010 900,1030 1010,1050 1034", INDIGO],
  ["M981 857 C 1040 860, 1110 950,1160 1005 C 1180 1030,1190 1033,1213 1033", "#7a3aa0", "#e8205a"],
  ["M224 1224 C 190 1222,195 1205,200 1195 C 230 1130,300 1100,405 1037 C 520 960,680 850,761 790 C 810 750,860 710,857 690", "#e8205a"],
  ["M324 1218 C 295 1218,295 1200,306 1193 C 330 1160,370 1110,405 1091 C 480 1040,560 970,619 927 C 680 880,790 790,830 735 C 850 710,860 700,857 690", "#e8205a"],
  ["M822 690 C 815 692,815 695,780 707 C 650 750,500 780,415 797 C 360 810,300 825,304 832 C 306 838,315 836,324 836", WIRE],
  ["M366 836 C 400 845,430 910,482 994 C 510 1050,540 1110,590 1119", "#1e78d0"],
  ["M366 1218 C 430 1215,500 1190,564 1175 L 590 1175", "#3f55b0"],
];

const bundle: W[] = [];
[
  [1021.4, 560],
  [1024.9, 707],
  [1024, 852],
].forEach(([ox, oy], m) => {
  for (let i = 0; i < 16; i++) {
    const sx = 899 + 28.3 * (i % 4);
    const sy = 690 + 28.3 * Math.floor(i / 4);
    const dx = ox + 27.1 + 28.1 * (i % 4);
    const dy = oy + 29 + 28.3 * Math.floor(i / 4);
    const far = m === 0 ? 85 : m === 1 ? 60 : 78;
    const tint = (m === 0 && i === 15) || (m === 1 && (i === 13 || i === 14 || i === 15)) ? "#4a55b8" : WIRE;
    bundle.push([
      `M${sx} ${sy} C ${sx + far} ${sy + (m === 0 ? 8 : 4)}, ${dx - far} ${dy}, ${dx} ${dy}`,
      tint,
    ]);
  }
});

const ends = (d: string) => {
  const n = d.match(/-?\d+(\.\d+)?/g)!.map(Number);
  return { x1: n[0], y1: n[1], x2: n[n.length - 2], y2: n[n.length - 1] };
};

const Wires = () => (
  <WireLayer viewBox="62 62 2150 1623">
    <defs>
      {wires.map(([d, a, b], i) =>
        b ? (
          <linearGradient key={i} id={`w${i}`} gradientUnits="userSpaceOnUse" {...ends(d)}>
            <stop offset="0" stopColor={a} />
            <stop offset="1" stopColor={b} />
          </linearGradient>
        ) : null
      )}
    </defs>
    {bundle.map(([d, a], i) => (
      <path key={i} d={d} stroke={a} strokeWidth={6.5} />
    ))}
    {wires.map(([d, a, b], i) => (
      <path key={i} d={d} stroke={b ? `url(#w${i})` : a} strokeWidth={5.5} />
    ))}
  </WireLayer>
);

export default function App() {
  return (
    <Page>
      <GlobalStyle />
      <Canvas>
        <Wires />
        <Clock />
        <Sequencer {...S1} />
        <Sequencer {...S2} />
        <Env x={1019} y={170} h={379} vals={[0.08, 0.27, 0.22, 0.3, 0.62, 0.28, 0.22, 0.1]} fill={["#b01010", "#800a0a", "#f02010", "#0a1522"]} />
        <Env x={1021.7} y={1006} h={381} vals={[0.08, 0.17, 0.22, 0.33, 0.67, 0.27, 0.12, 0.1]} fill={["#d01a10", "#3a0a14", "#f02a10", "#0a1522"]} />
        <Vco />
        <Vco2 />
        <Filter x={1412} y={170} w={154} vals={[0.03, 0.27, 0.98]} />
        <Filter x={1427} y={1003} w={154} vals={[0.03, 0.7, 0.97]} />
        <Delay />
        <Spring x={1745} y={171} vals={[0.6, 0.22, 0.08, 0.2]} />
        <Spring x={1742} y={355} vals={[0.55, 0.22, 0.23, 0.08]} />
        <Tiny />
        <Mixer />
        <Pattern x={1021.4} y={560} name="Kick" />
        <Pattern x={1024.9} y={707} name="Snare" />
        <Pattern x={1024} y={852} name="Cymbal" />
        <Drum />
        <Att x={195} y={1195} math={["*0.71", "+0.69", "=1.41"]} v={[0.75, 0.7]} fill={["#f02a1e", "#f02a1e"]} />
        <Att x={296} y={1189} math={["*0.3", "+0", "=0.3"]} v={[0.27, 0]} fill={["#f02a1e", "#3a0a0a"]} />
        <Att x={296} y={808} math={["*0.77", "+0", "=0"]} v={[0.75, 0]} fill={["#1a0505", "#0a0a12"]} />
        <Att x={1591} y={1003} math={["*0.16", "+0", "=0"]} v={[0.15, 0]} fill={["#1a0508", "#0a0a12"]} />
        <Att x={1696.6} y={1001} math={["*1", "+0.28", "=0.28"]} v={[1, 0.3]} fill={["#300810", "#500a0a"]} />
        <Att x={1805} y={1001} math={["*0.21", "+0.19", "=0.19"]} v={[0.2, 0.2]} fill={["#200810", "#500a0a"]} />
        <Icon $x={79} $y={80} width={36} height={36} viewBox="0 0 36 36">
          <rect x="2.5" y="3" width="13" height="13" />
          <rect x="20" y="3" width="13" height="13" />
          <rect x="2.5" y="20.5" width="13" height="13" />
          <rect x="20" y="20.5" width="13" height="13" />
        </Icon>
        <Icon $x={83} $y={1635} width={28} height={30} viewBox="0 0 28 30">
          <path d="M2 12 L14 2.5 L26 12" />
          <path d="M2 28 L14 17.5 L26 28" />
        </Icon>
        <Icon $x={160} $y={1633} width={36} height={33} viewBox="0 0 36 33">
          <rect x="3" y="13.5" width="17" height="17.5" />
          <path d="M16 13 C 16 1, 32 -1, 32.5 12" />
        </Icon>
        <Icon $x={243} $y={1632} width={36} height={36} viewBox="0 0 36 36">
          <circle cx="18" cy="18" r="15.5" />
          <path d="M18 18 L18 7 M18 18 L25.5 9.5" />
        </Icon>
        <Cpu>CPU: 60%</Cpu>
      </Canvas>
    </Page>
  );
}
